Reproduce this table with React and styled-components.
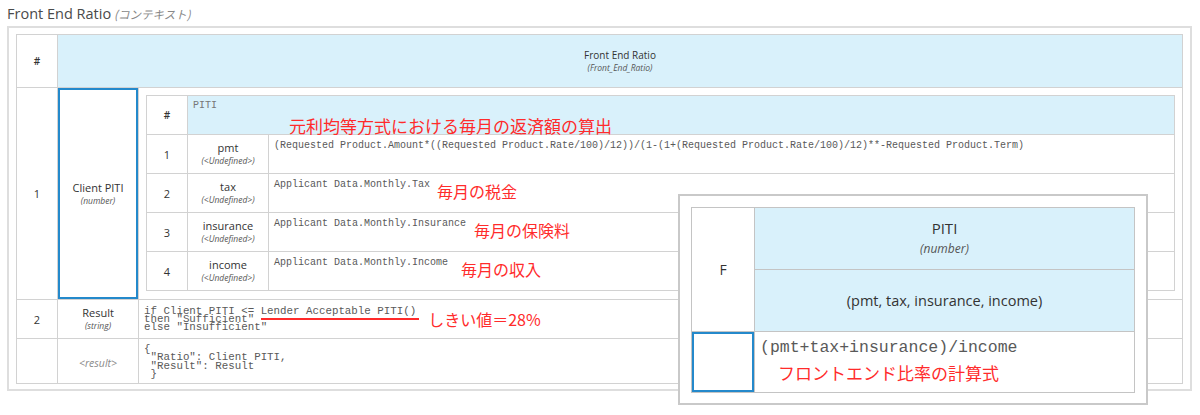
import React from 'react'
import styled, { createGlobalStyle } from 'styled-components'

const BLUE_HEAD = '#d9f1fb'
const SELECT = '#2489cb'
const RED = '#ff2b2b'

const GlobalStyle = createGlobalStyle`
  html, body {
    margin: 0;
    padding: 0;
    background: #fff;
  }
  body {
    font-family: "Open Sans", "Noto Sans CJK JP", sans-serif;
    color: #333;
  }
`
const Page = styled.div`
  position: relative;
  width: 1200px;
  height: 415px;
  box-sizing: border-box;
  padding: 4px 8px 0 7px;
  overflow: hidden;
`
const Title = styled.h1`
  margin: 0;
  font-size: 14.5px;
  font-weight: 400;
  line-height: 20px;
  color: #4a4a4a;
`
const Context = styled.em`
  font-family: "Noto Sans CJK JP", sans-serif;
  font-size: 11.5px;
  color: #888;
  margin-left: 3px;
`
const Frame = styled.section`
  margin-top: 2px;
  border: 2px solid #dedede;
  padding: 6px 7px 5px;
`
const Grid = styled.table`
  width: 100%;
  border-collapse: collapse;
  table-layout: fixed;
`
const Col = styled.col`
  width: ${p => (p.$w ? `${p.$w}px` : 'auto')};
`
const Cell = styled.td`
  border: 1px solid ${p => p.$line || '#d2d2d2'};
  padding: 0;
  height: ${p => (p.$h ? `${p.$h}px` : 'auto')};
  background: ${p => (p.$head ? BLUE_HEAD : '#fff')};
  text-align: center;
  vertical-align: middle;
  box-sizing: border-box;
  box-shadow: ${p => (p.$selected ? `inset 0 0 0 2px ${SELECT}` : 'none')};
`
const Num = styled(Cell)`
  font-size: ${p => (p.$hash ? '10px' : '11px')};
  font-weight: ${p => (p.$hash ? 600 : 400)};
  color: #333;
`
const Name = styled.div`
  font-size: ${p => p.$size || 11}px;
  line-height: ${p => p.$lh || 14}px;
  color: #333;
`
const Type = styled.div`
  font-size: ${p => p.$size || 8.5}px;
  line-height: ${p => p.$lh || 12}px;
  font-style: italic;
  color: #555;
  margin-top: ${p => p.$gap || 0}px;
`
const Placeholder = styled.span`
  font-size: 10.5px;
  font-style: italic;
  color: #8a8a8a;
`
const Nest = styled(Cell)`
  padding: 7px;
  vertical-align: top;
`
const CodeCell = styled(Cell)`
  text-align: left;
  vertical-align: top;
  padding: ${p => p.$pt || 5}px 5px 0 5px;
`
const Code = styled.div`
  font-family: "Liberation Mono", "Courier New", monospace;
  font-size: ${p => p.$size || 10}px;
  line-height: ${p => p.$lh || 12}px;
  color: ${p => p.$color || '#595959'};
  white-space: pre;
`
const Marked = styled.span`
  border-bottom: 2px solid ${RED};
  padding: 0 3px 1px 0;
`
const NoteRow = styled.div`
  display: flex;
  align-items: flex-start;
  gap: ${p => p.$gap || 0}px;
`
const Note = styled.div`
  font-family: "Noto Sans CJK JP", sans-serif;
  color: ${RED};
  font-size: ${p => p.$size || 16}px;
  line-height: 1;
  white-space: nowrap;
  margin-top: ${p => p.$top || 0}px;
  margin-left: ${p => p.$left || 0}px;
`
const Popup = styled.div`
  position: absolute;
  left: 678px;
  top: 194px;
  width: 470px;
  height: 211px;
  box-sizing: border-box;
  border: 2px solid #c9c9c9;
  background: #fff;
  padding: 11px;
`
const PopName = styled.div`
  font-size: ${p => p.$size || 15}px;
  line-height: 20px;
  color: #333;
`
const PopHead = styled(Cell)`
  vertical-align: ${p => (p.$top ? 'top' : 'middle')};
  padding-top: ${p => (p.$top ? 10 : 0)}px;
`

const entries = [
  {
    name: 'pmt',
    expr: '(Requested Product.Amount*((Requested Product.Rate/100)/12))/(1-(1+(Requested Product.Rate/100)/12)**-Requested Product.Term)',
  },
  { name: 'tax', expr: 'Applicant Data.Monthly.Tax', note: '毎月の税金', gap: 7 },
  { name: 'insurance', expr: 'Applicant Data.Monthly.Insurance', note: '毎月の保険料', gap: 8 },
  { name: 'income', expr: 'Applicant Data.Monthly.Income', note: '毎月の収入', gap: 13 },
]

function Label({ name, type, ...rest }) {
  return (
    <Cell {...rest}>
      <Name>{name}</Name>
      <Type>{type}</Type>
    </Cell>
  )
}

function PitiTable() {
  return (
    <Grid>
      <colgroup>
        <Col $w={41} />
        <Col $w={81} />
        <Col />
      </colgroup>
      <tbody>
        <tr>
          <Num $hash $h={39}>#</Num>
          <CodeCell $head colSpan={2} $pt={4}>
            <Code $color="#777">PITI</Code>
            <Note $size={17} $top={5} $left={96}>元利均等方式における毎月の返済額の算出</Note>
          </CodeCell>
        </tr>
        {entries.map((e, i) => (
          <tr key={e.name}>
            <Num $h={39}>{i + 1}</Num>
            <Label name={e.name} type="(<Undefined>)" />
            <CodeCell>
              <NoteRow $gap={e.gap}>
                <Code>{e.expr}</Code>
                {e.note && <Note $top={4}>{e.note}</Note>}
              </NoteRow>
            </CodeCell>
          </tr>
        ))}
      </tbody>
    </Grid>
  )
}

export default function App() {
  return (
    <>
      <GlobalStyle />
      <Page>
        <Title>
          Front End Ratio<Context>(コンテキスト)</Context>
        </Title>
        <Frame>
          <Grid>
            <colgroup>
              <Col $w={41} />
              <Col $w={81} />
              <Col />
            </colgroup>
            <tbody>
              <tr>
                <Num $hash $h={53}>#</Num>
                <Cell $head colSpan={2}>
                  <Name $size={10}>Front End Ratio</Name>
                  <Type $size={8.5}>(Front_End_Ratio)</Type>
                </Cell>
              </tr>
              <tr>
                <Num $h={212}>1</Num>
                <Label $selected name="Client PITI" type="(number)" />
                <Nest>
                  <PitiTable />
                </Nest>
              </tr>
              <tr>
                <Num $h={39}>2</Num>
                <Label name="Result" type="(string)" />
                <CodeCell $pt={7}>
                  <NoteRow $gap={9}>
                    <Code $size={10.8} $lh={8}>
                      {'if Client PITI <= '}
                      <Marked>Lender Acceptable PITI()</Marked>
                      {'\nthen "Sufficient"\nelse "Insufficient"'}
                    </Code>
                    <Note $top={4}>しきい値＝28%</Note>
                  </NoteRow>
                </CodeCell>
              </tr>
              <tr>
                <Num $h={45} />
                <Cell>
                  <Placeholder>&lt;result&gt;</Placeholder>
                </Cell>
                <CodeCell $pt={6}>
                  <Code $size={10.8} $lh={8.3}>
                    {'{\n "Ratio": Client PITI,\n "Result": Result\n }'}
                  </Code>
                </CodeCell>
              </tr>
            </tbody>
          </Grid>
        </Frame>

        <Popup>
          <Grid>
            <colgroup>
              <Col $w={63} />
              <Col />
            </colgroup>
            <tbody>
              <tr>
                <Cell rowSpan={2} $line="#c4c4c4">
                  <PopName $size={14}>F</PopName>
                </Cell>
                <PopHead $head $top $h={62} $line="#c4c4c4">
                  <PopName>PITI</PopName>
                  <Type $size={12} $lh={16} $gap={3}>(number)</Type>
                </PopHead>
              </tr>
              <tr>
                <PopHead $head $h={62} $line="#c4c4c4">
                  <PopName $size={14.5}>(pmt, tax, insurance, income)</PopName>
                </PopHead>
              </tr>
              <tr>
                <Cell $selected $h={61} $line="#c4c4c4" />
                <CodeCell $pt={6} $line="#c4c4c4">
                  <Code $size={16.5} $lh={20}>(pmt+tax+insurance)/income</Code>
                  <Note $size={17} $top={6} $left={18}>フロントエンド比率の計算式</Note>
                </CodeCell>
              </tr>
            </tbody>
          </Grid>
        </Popup>
      </Page>
    </>
  )
}
